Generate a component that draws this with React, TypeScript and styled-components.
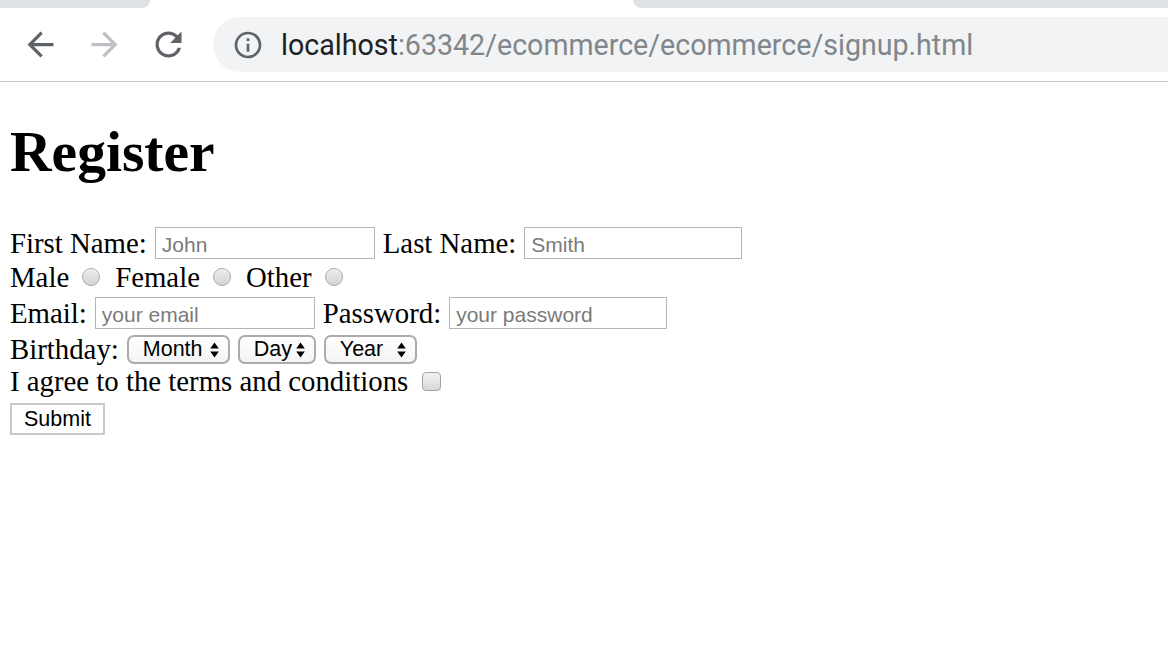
import React from "react";
import styled, { createGlobalStyle } from "styled-components";

const GlobalStyle = createGlobalStyle`
	html, body {
		margin: 0;
		padding: 0;
		background: #ffffff;
	}
	body {
		font-family: "Liberation Serif", "Times New Roman", serif;
		color: #000000;
	}
`;

const TabStrip = styled.div`
	display: flex;
	height: 8px;
	background: #ffffff;
`;

const InactiveTab = styled.div<{ side: "left" | "right" }>`
	background: #dee1e6;
	height: 100%;
	${(props) =>
		props.side === "left"
			? "width: 150px; border-bottom-right-radius: 8px;"
			: "flex: 1; border-bottom-left-radius: 8px;"}
`;

const ActiveTabGap = styled.div`
	width: 483px;
`;

const Toolbar = styled.div`
	display: flex;
	align-items: center;
	height: 73px;
	padding-left: 8px;
	border-bottom: 1px solid #c6c6c6;
	background: #ffffff;
	overflow: hidden;
`;

const NavButton = styled.div`
	width: 64px;
	height: 48px;
	display: flex;
	align-items: center;
	justify-content: center;
	flex-shrink: 0;
`;

const Omnibox = styled.div`
	margin-left: 13px;
	flex: 1;
	height: 55px;
	min-width: 1000px;
	background: #f1f3f4;
	border-radius: 28px 0 0 28px;
	display: flex;
	align-items: center;
	padding-left: 19px;
`;

const Url = styled.div`
	margin-left: 17px;
	font-family: Roboto, "Liberation Sans", Arial, sans-serif;
	font-size: 28.6px;
	color: #80868b;
	white-space: nowrap;
`;

const Host = styled.span`
	color: #202124;
`;

const Page = styled.main`
	padding: 0 10px;
`;

const Title = styled.h1`
	margin: 38px 0 42px;
	font-size: 57.6px;
	line-height: 64px;
	font-weight: bold;
`;

const Form = styled.form`
	display: flex;
	flex-direction: column;
`;

const Row = styled.div<{ h: number; gap?: number }>`
	display: flex;
	align-items: center;
	height: ${(props) => props.h}px;
	gap: ${(props) => props.gap ?? 0}px;
`;

const Label = styled.span`
	font-size: 28.8px;
	line-height: 33px;
	white-space: nowrap;
`;

const TextInput = styled.input<{ w: number }>`
	box-sizing: border-box;
	width: ${(props) => props.w}px;
	height: 32px;
	border: 1px solid #b5b5b5;
	border-radius: 0;
	padding: 3px 6px 0;
	font-family: "Liberation Sans", Arial, sans-serif;
	font-size: 21px;
	background: #ffffff;
	outline: none;
	&::placeholder {
		color: #7a7a7a;
	}
`;

const Radio = styled.span`
	box-sizing: border-box;
	width: 18px;
	height: 18px;
	border-radius: 50%;
	border: 1px solid #a8a8a8;
	background: linear-gradient(#ececec, #d4d4d4);
	box-shadow: inset 0 1px 1px rgba(255, 255, 255, 0.8);
	margin: 0 15px 0 13px;
	flex-shrink: 0;
`;

const Select = styled.div<{ w: number }>`
	box-sizing: border-box;
	width: ${(props) => props.w}px;
	height: 29px;
	border: 2px solid #ababab;
	border-radius: 7px;
	background: linear-gradient(#ffffff, #f4f4f4);
	display: flex;
	align-items: center;
	justify-content: space-between;
	padding: 1px 9px 0 14px;
	font-family: "Liberation Sans", Arial, sans-serif;
	font-size: 21.5px;
	color: #000000;
`;

const Checkbox = styled.span`
	box-sizing: border-box;
	width: 19px;
	height: 19px;
	border-radius: 4px;
	border: 1px solid #a3a3a3;
	background: linear-gradient(#f2f2f2, #d8d8d8);
	margin-left: 14px;
	flex-shrink: 0;
`;

const SubmitButton = styled.button`
	box-sizing: border-box;
	width: 95px;
	height: 32px;
	border: 2px solid #c9c9c9;
	border-radius: 0;
	background: #ffffff;
	font-family: "Liberation Sans", Arial, sans-serif;
	font-size: 21.5px;
	color: #000000;
	padding: 0;
`;

const Arrow = ({ dir }: { dir: "back" | "forward" }) => (
	<svg width="39" height="39" viewBox="0 0 24 24" fill={dir === "back" ? "#5f6368" : "#bdc1c6"}>
		<path
			d="M20 11H7.83l5.59-5.59L12 4l-8 8 8 8 1.41-1.41L7.83 13H20v-2z"
			transform={dir === "forward" ? "rotate(180 12 12)" : undefined}
		/>
	</svg>
);

const Reload = () => (
	<svg width="39" height="39" viewBox="0 0 24 24" fill="#5f6368">
		<path d="M17.65 6.35C16.2 4.9 14.21 4 12 4c-4.42 0-7.990 3.58-7.99 8s3.57 8 7.99 8c3.73 0 6.84-2.55 7.73-6h-2.08c-.82 2.33-3.04 4-5.65 4-3.31 0-6-2.69-6-6s2.69-6 6-6c1.66 0 3.14.69 4.22 1.78L13 11h7V4l-2.35 2.35z" />
	</svg>
);

const InfoIcon = () => (
	<svg width="32" height="32" viewBox="0 0 24 24" fill="#5f6368">
		<path d="M11 7h2v2h-2zm0 4h2v6h-2zm1-9C6.48 2 2 6.48 2 12s4.48 10 10 10 10-4.48 10-10S17.52 2 12 2zm0 18c-4.41 0-8-3.59-8-8s3.59-8 8-8 8 3.59 8 8-3.59 8-8 8z" />
	</svg>
);

const Updown = () => (
	<svg width="9" height="18" viewBox="0 0 9 18" fill="#000000">
		<path d="M4.5 1.5L8.8 7.5H0.2z M4.5 16.5L8.8 10.5H0.2z" />
	</svg>
);

export default function App() {
	return (
		<>
			<GlobalStyle />
			<TabStrip>
				<InactiveTab side="left" />
				<ActiveTabGap />
				<InactiveTab side="right" />
			</TabStrip>
			<Toolbar>
				<NavButton>
					<Arrow dir="back" />
				</NavButton>
				<NavButton>
					<Arrow dir="forward" />
				</NavButton>
				<NavButton>
					<Reload />
				</NavButton>
				<Omnibox>
					<InfoIcon />
					<Url>
						<Host>localhost</Host>:63342/ecommerce/ecommerce/signup.html
					</Url>
				</Omnibox>
			</Toolbar>
			<Page>
				<Title>Register</Title>
				<Form onSubmit={(event) => event.preventDefault()}>
					<Row h={34} gap={8}>
						<Label>First Name:</Label>
						<TextInput w={220} placeholder="John" />
						<Label>Last Name:</Label>
						<TextInput w={218} placeholder="Smith" />
					</Row>
					<Row h={34}>
						<Label>Male</Label>
						<Radio />
						<Label>Female</Label>
						<Radio />
						<Label>Other</Label>
						<Radio />
					</Row>
					<Row h={38} gap={8}>
						<Label>Email:</Label>
						<TextInput w={220} placeholder="your email" />
						<Label>Password:</Label>
						<TextInput w={218} placeholder="your password" type="password" />
					</Row>
					<Row h={34} gap={8}>
						<Label>Birthday:</Label>
						<Select w={103}>
							Month <Updown />
						</Select>
						<Select w={78}>
							Day <Updown />
						</Select>
						<Select w={93}>
							Year <Updown />
						</Select>
					</Row>
					<Row h={30}>
						<Label>I agree to the terms and conditions</Label>
						<Checkbox />
					</Row>
					<Row h={46}>
						<SubmitButton type="submit">Submit</SubmitButton>
					</Row>
				</Form>
			</Page>
		</>
	);
}
